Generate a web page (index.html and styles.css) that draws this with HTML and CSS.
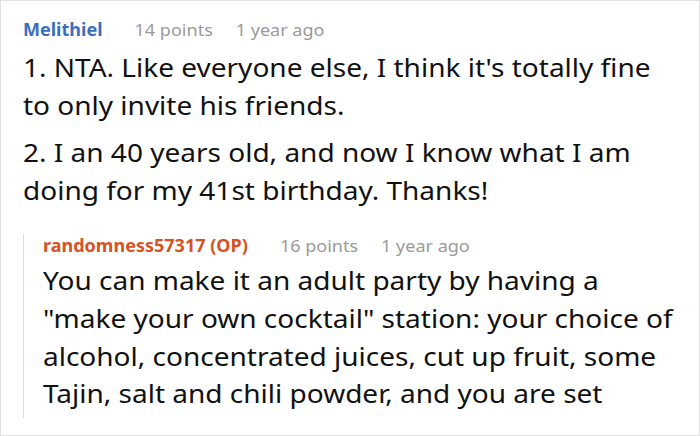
FILE: index.html
```html
<!DOCTYPE html>
<html>
<head>
<meta charset="utf-8">
<link rel="stylesheet" href="styles.css">
</head>
<body>
<div class="card">
  <div class="comment">
    <div class="meta">
      <span class="author">Melithiel</span>
      <span class="info">14 points</span>
      <span class="info">1 year ago</span>
    </div>
    <div class="text main-text">
      <p>1. NTA. Like everyone else, I think it's totally fine to only invite his friends.</p>
      <p>2. I an 40 years old, and now I know what I am doing for my 41st birthday. Thanks!</p>
    </div>
  </div>
  <div class="reply">
    <div class="meta">
      <span class="author op">randomness57317 (OP)</span>
      <span class="info">16 points</span>
      <span class="info">1 year ago</span>
    </div>
    <div class="text reply-text">
      <p>You can make it an adult party by having a "make your own cocktail" station: your choice of alcohol, concentrated juices, cut up fruit, some Tajin, salt and chili powder, and you are set</p>
    </div>
  </div>
</div>
</body>
</html>
```

FILE: styles.css
```css
html, body {
  margin: 0;
  padding: 0;
  background: #ffffff;
}
body {
  font-family: "Noto Sans", "Open Sans", sans-serif;
  color: #111111;
}
.card {
  box-sizing: border-box;
  width: 700px;
  height: 436px;
  border: 1px solid #e2e2e2;
  padding: 17px 22px 0 22px;
  overflow: hidden;
}
.meta {
  display: flex;
  gap: 21.7px;
  font-size: 17px;
  line-height: 24px;
  white-space: nowrap;
  transform: scaleX(1.06);
  transform-origin: 0 0;
}
.author {
  font-weight: 700;
  color: #3b6ec0;
  margin-right: 8.5px;
}
.author.op {
  color: #d6531f;
}
.info {
  color: #9a9a9a;
}
.text {
  font-size: 26px;
  line-height: 37.7px;
  transform: scaleX(1.077);
  transform-origin: 0 0;
}
.text p {
  margin: 0;
}
.main-text {
  width: 600px;
  margin-top: 7px;
}
.main-text p + p {
  margin-top: 10px;
}
.reply {
  margin-top: 32.4px;
  border-left: 1px solid #dddddd;
  padding-left: 19px;
  padding-bottom: 5px;
}
.reply .meta {
  margin-top: -8.6px;
}
.reply-text {
  width: 587px;
  margin-top: 4.7px;
}
```
